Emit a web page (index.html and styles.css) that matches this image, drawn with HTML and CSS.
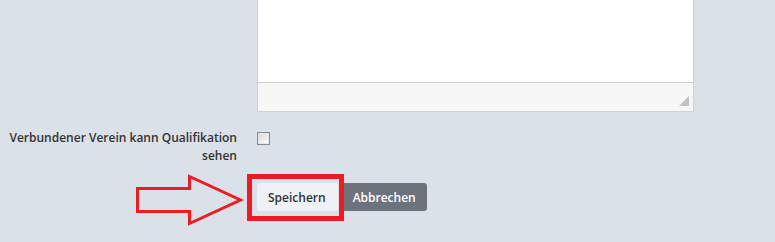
FILE: index.html
```html
<!DOCTYPE html>
<html>
<head>
    <title>Verein bearbeiten</title>
    <link rel="stylesheet" href="styles.css">
</head>
<body>

<form class="form">
    <!-- Beschreibung -->
    <div class="row">
        <div class="label"></div>
        <div class="control">
            <div class="editor">
                <div class="editor-body"></div>
                <div class="editor-footer"><span class="grip"></span></div>
            </div>
        </div>
    </div>

    <div class="row row-check">
        <label class="label" for="quali">Verbundener Verein kann Qualifikation sehen</label>
        <div class="control">
            <input type="checkbox" id="quali" class="check" />
        </div>
    </div>

    <div class="row row-actions">
        <div class="label"></div>
        <div class="control actions">
            <svg class="arrow" width="120" height="60" viewBox="130 170 120 60">
                <polygon points="137.5,188.5 189.5,188.5 189.5,176.5 240.5,200 189.5,223.5 189.5,211.5 137.5,211.5" />
            </svg>
            <span class="mark"></span>
            <button type="button" class="btn btn-save">Speichern</button>
            <button type="button" class="btn btn-cancel">Abbrechen</button>
        </div>
    </div>
</form>

</body>
</html>
```

FILE: styles.css
```css
html, body{
    min-height: 100%;
}
body{
    margin: 0;
    padding-bottom: 40px;
    background: #dbe1e8;
    font-family: "Open Sans", "Liberation Sans", sans-serif;
    font-size: 12px;
    color: #333;
}
/*Formular*/
.row{
    display: grid;
    grid-template-columns: 237px 437px;
    column-gap: 20px;
}
.label{
    font-weight: 600;
    text-align: right;
    line-height: 18px;
    padding-top: 1px;
}
/*Textfeld mit Fusszeile*/
.editor{
    border: 1px solid #d0d0d0;
    border-top: none;
    background: #fff;
}
.editor-body{
    height: 82px;
}
.editor-footer{
    height: 29px;
    background: #f7f7f7;
    border-top: 1px solid #d0d0d0;
    display: flex;
    justify-content: flex-end;
    align-items: flex-end;
    padding: 0 4px 5px 0;
    box-sizing: border-box;
}
.grip{
    width: 0;
    height: 0;
    border-left: 10px solid transparent;
    border-bottom: 10px solid #c2c2c2;
}
/*Checkbox*/
.row-check{
    margin-top: 16px;
}
.check{
    appearance: none;
    -webkit-appearance: none;
    width: 13px;
    height: 13px;
    margin: 4px 0 0 0;
    border: 1px solid #8a8a8a;
    box-shadow: inset 0 0 0 1px #e6e6e6;
    background: linear-gradient(135deg, #d6d6d6, #fff);
    display: block;
}
/*Buttons*/
.row-actions{
    margin-top: 18px;
}
.actions{
    position: relative;
    display: flex;
    align-items: flex-start;
    gap: 3px;
}
.btn{
    height: 28px;
    border: none;
    border-radius: 3px;
    font-family: inherit;
    font-size: 12px;
    font-weight: 600;
    cursor: pointer;
}
.btn-save{
    background: #eff1f4;
    color: #333;
    padding: 0 12px 0 11px;
}
.btn-cancel{
    background: #6c737d;
    color: #fff;
    padding: 0 11px 0 12px;
}
/*Markierung*/
.mark{
    position: absolute;
    left: -10px;
    top: -9px;
    width: 87px;
    height: 37px;
    border: 5px solid #ed1c24;
    z-index: 2;
}
.arrow{
    position: absolute;
    left: -127px;
    top: -13px;
}
.arrow polygon{
    fill: none;
    stroke: #ed1c24;
    stroke-width: 3;
}
```
